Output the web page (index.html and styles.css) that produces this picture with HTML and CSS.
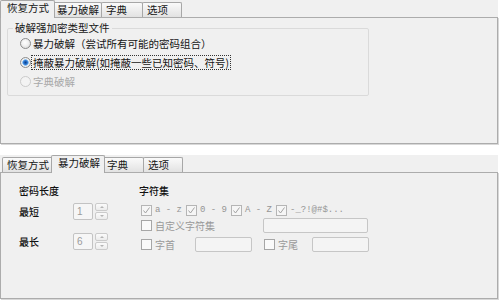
FILE: index.html
```html
<!DOCTYPE html>
<html lang="zh-CN">
<head>
<meta charset="utf-8">
<title>恢复方式</title>
<link rel="stylesheet" href="styles.css">
</head>
<body>
<div class="dlg">
  <div class="tabs">
    <div class="tab w-rec active">恢复方式</div>
    <div class="tab w-bru">暴力破解</div>
    <div class="tab w-dic">字典</div>
    <div class="tab w-opt">选项</div>
  </div>
  <div class="panel">
    <fieldset class="group">
      <legend>破解强加密类型文件</legend>
      <div class="opt"><span class="radio"></span><span class="lbl">暴力破解（尝试所有可能的密码组合）</span></div>
      <div class="opt"><span class="radio on"></span><span class="lbl focus">掩蔽暴力破解(如掩蔽一些已知密码、符号)</span></div>
      <div class="opt dis"><span class="radio"></span><span class="lbl">字典破解</span></div>
    </fieldset>
  </div>
</div>

<div class="dlg dlg2">
  <div class="tabs">
    <div class="tab w-rec">恢复方式</div>
    <div class="tab w-bru active">暴力破解</div>
    <div class="tab w-dic">字典</div>
    <div class="tab w-opt">选项</div>
  </div>
  <div class="panel panel2">
    <div class="col1">
      <div class="head">密码长度</div>
      <div class="spinrow">
        <span class="slbl">最短</span>
        <span class="num">1</span>
        <span class="spin"><span class="up"></span><span class="dn"></span></span>
      </div>
      <div class="spinrow second">
        <span class="slbl">最长</span>
        <span class="num">6</span>
        <span class="spin"><span class="up"></span><span class="dn"></span></span>
      </div>
    </div>
    <div class="col2">
      <div class="head">字符集</div>
      <div class="crow r1">
        <span class="ci"><span class="cb"><svg viewBox="0 0 9 9" width="9" height="9"><polyline points="1.5,4.5 3.5,7 7.5,1.5" fill="none" stroke="#a3a3a3" stroke-width="1"/></svg></span><span class="mono">a - z</span></span>
        <span class="ci"><span class="cb"><svg viewBox="0 0 9 9" width="9" height="9"><polyline points="1.5,4.5 3.5,7 7.5,1.5" fill="none" stroke="#a3a3a3" stroke-width="1"/></svg></span><span class="mono">0 - 9</span></span>
        <span class="ci"><span class="cb"><svg viewBox="0 0 9 9" width="9" height="9"><polyline points="1.5,4.5 3.5,7 7.5,1.5" fill="none" stroke="#a3a3a3" stroke-width="1"/></svg></span><span class="mono">A - Z</span></span>
        <span class="ci"><span class="cb"><svg viewBox="0 0 9 9" width="9" height="9"><polyline points="1.5,4.5 3.5,7 7.5,1.5" fill="none" stroke="#a3a3a3" stroke-width="1"/></svg></span><span class="mono">-_?!@#$...</span></span>
      </div>
      <div class="crow r2">
        <span class="cb empty"></span><span class="clbl wide">自定义字符集</span>
        <span class="tbox big"></span>
      </div>
      <div class="crow r3">
        <span class="cb empty"></span><span class="clbl short">字首</span>
        <span class="tbox small"></span>
        <span class="cb empty gapl"></span><span class="clbl short2">字尾</span>
        <span class="tbox small"></span>
      </div>
    </div>
  </div>
</div>
</body>
</html>
```

FILE: styles.css
```css
html, body {
  margin: 0;
  padding: 0;
  background: #ffffff;
}
body {
  width: 500px;
  height: 301px;
  overflow: hidden;
  font-family: "Noto Sans CJK SC", "Noto Sans", sans-serif;
  font-size: 10.5px;
  color: #141414;
}

.dlg {
  width: 498px;
  height: 144px;
  background: #f0f0f0;
  display: flex;
  flex-direction: column;
}
.dlg2 {
  margin-top: 11px;
}

/* tabs */
.tabs {
  flex: none;
  height: 17px;
  display: flex;
  align-items: flex-end;
  padding-left: 2px;
}
.tab {
  box-sizing: border-box;
  height: 15px;
  border: 1px solid #a7a7a7;
  border-bottom: none;
  border-radius: 2px 2px 0 0;
  background: linear-gradient(#fafafa, #e2e2e2);
  padding-left: 4px;
  line-height: 13px;
  white-space: nowrap;
  color: #161616;
}
.tab + .tab {
  margin-left: -1px;
}
.w-rec { width: 51px; }
.w-bru { width: 50px; }
.w-dic { width: 42px; }
.w-opt { width: 40px; }
.tab.active {
  height: 18px;
  margin: 0 -2px -1px -2px;
  padding-left: 6px;
  line-height: 14px;
  background: #f0f0f0;
  position: relative;
  z-index: 1;
}
.w-rec.active { width: 55px; }
.w-bru.active { width: 54px; }

/* panel */
.panel {
  flex: 1;
  box-sizing: border-box;
  border: 1px solid #acacac;
  box-shadow: 1px 1px 0 #d8d8d8;
  background: #f0f0f0;
}

/* group box */
.group {
  box-sizing: border-box;
  width: 362px;
  margin: 4px 0 0 6px;
  padding: 0 0 4px 0;
  border: 1px solid #dadada;
  border-radius: 2px;
}
.group legend {
  margin-left: 5px;
  padding: 0 2px;
  line-height: 12px;
  color: #161616;
}
.opt {
  height: 19px;
  display: flex;
  align-items: center;
  padding-left: 12px;
}
.radio {
  box-sizing: border-box;
  width: 11px;
  height: 11px;
  border-radius: 50%;
  border: 1px solid #8d8d8d;
  background: radial-gradient(circle at 45% 40%, #ffffff 0, #f2f2f2 40%, #d2d2d2 100%);
  flex: none;
}
.radio.on {
  background: radial-gradient(circle at 50% 50%, #0f3f86 0, #2c7ad6 2px, #8fc0ee 3px, #f4f4f4 3.6px, #d6d6d6 100%);
}
.lbl {
  margin-left: 2px;
  line-height: 13px;
  white-space: nowrap;
}
.lbl.focus {
  margin-left: 1px;
  padding: 0 1px;
  outline: 1px dotted #333;
}
.opt.dis .radio {
  border-color: #cbcbcb;
  background: #f3f3f3;
}
.opt.dis .lbl {
  color: #a8a8a8;
}

/* second panel */
.panel2 {
  display: flex;
  padding-left: 18px;
}
.col1 {
  width: 120px;
  flex: none;
}
.col2 {
  flex: none;
}
.head {
  margin-top: 12px;
  line-height: 12px;
  height: 12px;
  font-size: 10px;
  color: #111;
  font-weight: 500;
}
.spinrow {
  margin-top: 6px;
  height: 17px;
  display: flex;
  align-items: center;
}
.spinrow.second {
  margin-top: 13px;
}
.slbl {
  width: 54px;
  font-size: 10px;
  font-weight: 500;
  color: #111;
}
.num {
  box-sizing: border-box;
  width: 20px;
  height: 17px;
  border: 1px solid #c3c3c3;
  border-radius: 2px;
  background: #f6f6f6;
  color: #9b9b9b;
  font-family: "Liberation Sans", sans-serif;
  font-size: 10px;
  line-height: 15px;
  padding-left: 3px;
}
.spin {
  width: 13px;
  height: 17px;
  margin-left: 2px;
  display: flex;
  flex-direction: column;
  gap: 1px;
}
.spin span {
  flex: 1;
  box-sizing: border-box;
  border: 1px solid #cbcbcb;
  border-radius: 2px;
  background: linear-gradient(#fbfbfb, #ececec);
  display: flex;
  align-items: center;
  justify-content: center;
}
.spin .up::after {
  content: "";
  border-left: 2px solid transparent;
  border-right: 2px solid transparent;
  border-bottom: 2px solid #b4b4b4;
}
.spin .dn::after {
  content: "";
  border-left: 2px solid transparent;
  border-right: 2px solid transparent;
  border-top: 2px solid #b4b4b4;
}

.crow {
  display: flex;
  align-items: center;
  padding-left: 2px;
}
.crow.r1 {
  margin-top: 6px;
  height: 14px;
}
.crow.r2 {
  margin-top: 1px;
  height: 15px;
}
.crow.r3 {
  margin-top: 4px;
  height: 15px;
}
.ci {
  width: 45px;
  display: flex;
  align-items: center;
}
.cb {
  box-sizing: border-box;
  width: 11px;
  height: 11px;
  border: 1px solid #b5b5b5;
  background: #f6f6f6;
  display: flex;
  align-items: center;
  justify-content: center;
  flex: none;
}
.cb.empty {
  border-color: #a6a6a6;
  background: #fafafa;
}
.cb.gapl {
  margin-left: 12px;
}
.mono {
  margin-left: 3px;
  font-family: "Liberation Mono", "DejaVu Sans Mono", monospace;
  font-size: 9px;
  color: #959595;
  white-space: nowrap;
}
.clbl {
  margin-left: 3px;
  font-size: 10px;
  color: #999999;
  white-space: nowrap;
}
.clbl.wide { width: 108px; }
.clbl.short { width: 40px; }
.clbl.short2 { width: 34px; }
.tbox {
  box-sizing: border-box;
  height: 15px;
  border: 1px solid #c6c6c6;
  border-radius: 2px;
  background: #f4f4f4;
}
.tbox.big { width: 105px; }
.tbox.small { width: 57px; }
```
